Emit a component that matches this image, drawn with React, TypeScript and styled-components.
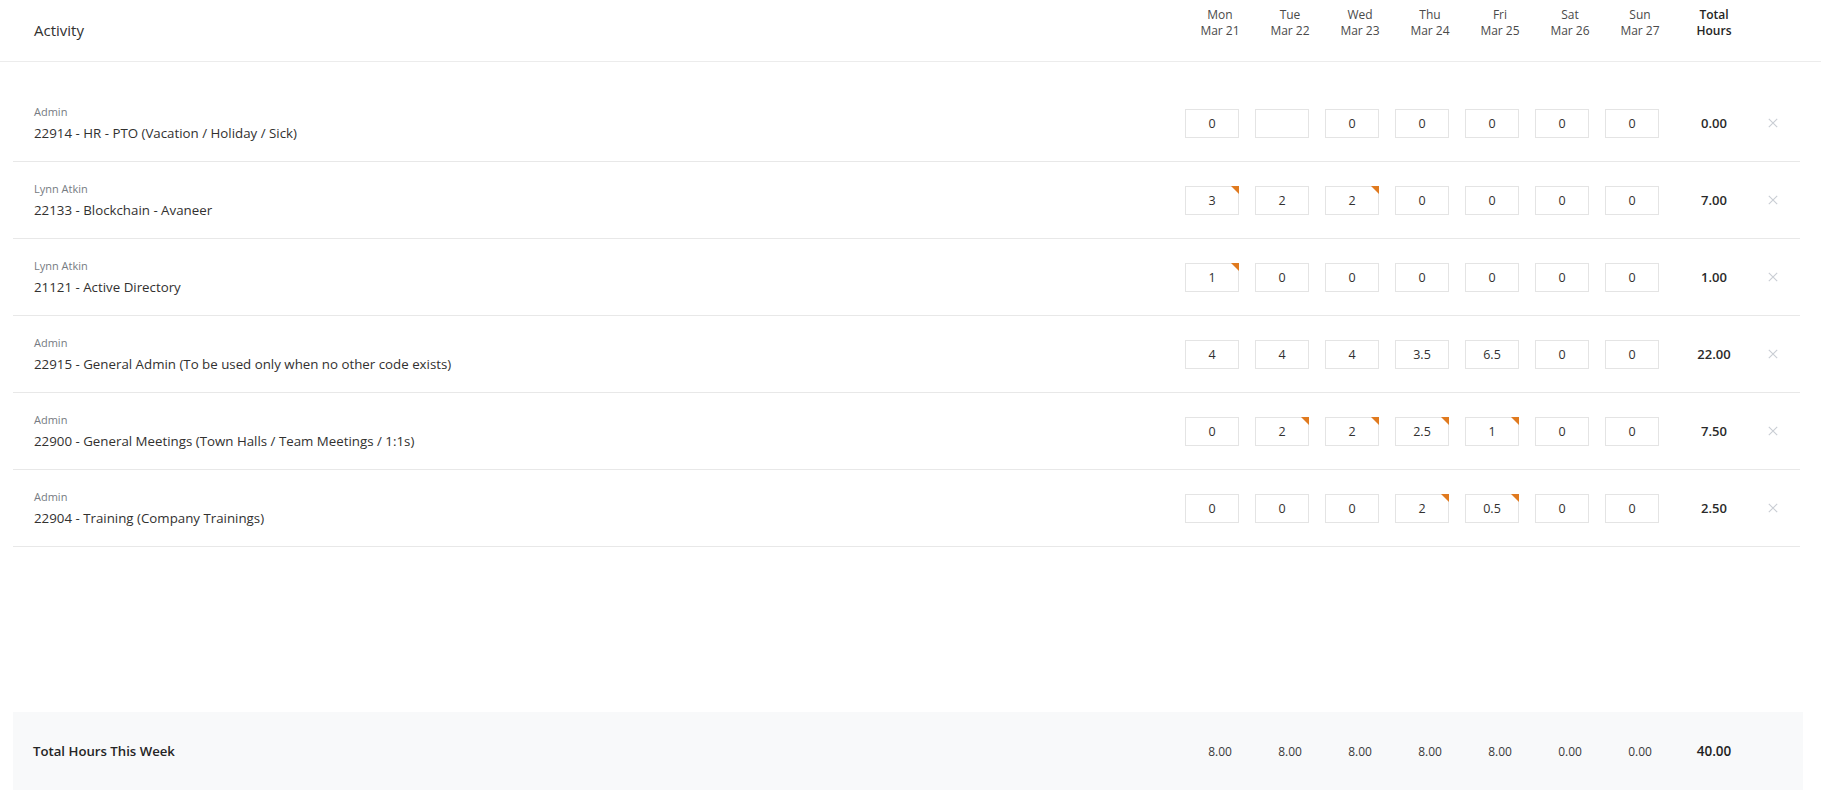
import React from "react";
import styled, { createGlobalStyle } from "styled-components";

const GlobalStyle = createGlobalStyle`
  html, body { margin: 0; padding: 0; background: #ffffff; }
  body { font-family: "Open Sans", "Noto Sans", Arial, sans-serif; color: #323130; }
  * { box-sizing: border-box; }
`;

const Page = styled.div`
  height: 802px;
  display: flex;
  flex-direction: column;
  padding-bottom: 12px;
`;

const gridCols = (action: number) => `minmax(0, 1fr) repeat(7, 70px) 78px ${action}px`;

const Header = styled.header`
  display: grid;
  grid-template-columns: ${gridCols(47)};
  height: 62px;
  padding: 0 21px 0 34px;
  border-bottom: 1px solid #ececec;
`;

const HeaderTitle = styled.div`
  align-self: center;
  font-size: 15px;
  color: #323130;
  padding-bottom: 1px;
`;

const DayHead = styled.div<{ $strong?: boolean }>`
  display: flex;
  flex-direction: column;
  align-items: center;
  padding-top: 7px;
  font-size: 12px;
  line-height: 16px;
  color: ${(p) => (p.$strong ? "#252525" : "#4a4a4a")};
  font-weight: ${(p) => (p.$strong ? 600 : 400)};
`;

const Body = styled.main`
  flex: 1;
  padding: 23px 21px 0 13px;
`;

const Row = styled.div`
  display: grid;
  grid-template-columns: ${gridCols(47)};
  align-items: center;
  height: 77px;
  padding-left: 21px;
  border-bottom: 1px solid #e8e8e8;
`;

const Label = styled.div`
  display: flex;
  flex-direction: column;
  gap: 5px;
`;

const Owner = styled.span`
  font-size: 11px;
  line-height: 15px;
  color: #767b82;
`;

const Title = styled.span`
  font-size: 13.3px;
  line-height: 19px;
  color: #323130;
`;

const Cell = styled.div`
  position: relative;
  width: 54px;
  height: 29px;
`;

const HourInput = styled.input`
  width: 100%;
  height: 100%;
  border: 1px solid #e4e4e4;
  background: #ffffff;
  text-align: center;
  font-family: inherit;
  font-size: 12.5px;
  color: #323130;
  padding: 0;
  outline: none;
`;

const Flag = styled.span`
  position: absolute;
  top: 0;
  right: 0;
  width: 0;
  height: 0;
  border-style: solid;
  border-width: 0 8px 8px 0;
  border-color: transparent #e07a1f transparent transparent;
`;

const Total = styled.div`
  text-align: center;
  font-size: 13px;
  font-weight: 600;
  color: #2a2a2a;
`;

const RemoveButton = styled.button`
  justify-self: start;
  margin-left: 15px;
  width: 10px;
  height: 10px;
  padding: 0;
  border: none;
  background: transparent;
  display: flex;
  cursor: pointer;
`;

const Footer = styled.footer`
  display: grid;
  grid-template-columns: ${gridCols(50)};
  align-items: center;
  height: 78px;
  margin: 0 18px 0 13px;
  padding-left: 20px;
  background: #f8f9fa;
`;

const FooterTitle = styled.div`
  font-size: 13.2px;
  font-weight: 600;
  color: #252525;
`;

const FooterValue = styled.div<{ $strong?: boolean }>`
  text-align: center;
  font-size: ${(p) => (p.$strong ? "13.5px" : "12px")};
  font-weight: ${(p) => (p.$strong ? 600 : 400)};
  color: ${(p) => (p.$strong ? "#1f1f1f" : "#3a3a3a")};
`;

type Entry = { v: string; flag?: boolean };
type Line = { owner: string; title: string; hours: Entry[]; total: string };

const e = (v: string, flag = false): Entry => ({ v, flag });

const days = [
  ["Mon", "Mar 21"],
  ["Tue", "Mar 22"],
  ["Wed", "Mar 23"],
  ["Thu", "Mar 24"],
  ["Fri", "Mar 25"],
  ["Sat", "Mar 26"],
  ["Sun", "Mar 27"],
];

const lines: Line[] = [
  {
    owner: "Admin",
    title: "22914 - HR - PTO (Vacation / Holiday / Sick)",
    hours: [e("0"), e(""), e("0"), e("0"), e("0"), e("0"), e("0")],
    total: "0.00",
  },
  {
    owner: "Lynn Atkin",
    title: "22133 - Blockchain - Avaneer",
    hours: [e("3", true), e("2"), e("2", true), e("0"), e("0"), e("0"), e("0")],
    total: "7.00",
  },
  {
    owner: "Lynn Atkin",
    title: "21121 - Active Directory",
    hours: [e("1", true), e("0"), e("0"), e("0"), e("0"), e("0"), e("0")],
    total: "1.00",
  },
  {
    owner: "Admin",
    title: "22915 - General Admin (To be used only when no other code exists)",
    hours: [e("4"), e("4"), e("4"), e("3.5"), e("6.5"), e("0"), e("0")],
    total: "22.00",
  },
  {
    owner: "Admin",
    title: "22900 - General Meetings (Town Halls / Team Meetings / 1:1s)",
    hours: [e("0"), e("2", true), e("2", true), e("2.5", true), e("1", true), e("0"), e("0")],
    total: "7.50",
  },
  {
    owner: "Admin",
    title: "22904 - Training (Company Trainings)",
    hours: [e("0"), e("0"), e("0"), e("2", true), e("0.5", true), e("0"), e("0")],
    total: "2.50",
  },
];

const weekTotals = ["8.00", "8.00", "8.00", "8.00", "8.00", "0.00", "0.00"];

const CloseIcon = () => (
  <svg width="10" height="10" viewBox="0 0 10 10" fill="none">
    <path d="M0.8 0.8 L9.2 9.2 M9.2 0.8 L0.8 9.2" stroke="#c9cdd4" strokeWidth="1.1" />
  </svg>
);

export default function App() {
  return (
    <>
      <GlobalStyle />
      <Page>
        <Header>
          <HeaderTitle>Activity</HeaderTitle>
          {days.map(([d, date]) => (
            <DayHead key={d}>
              <span>{d}</span>
              <span>{date}</span>
            </DayHead>
          ))}
          <DayHead $strong>
            <span>Total</span>
            <span>Hours</span>
          </DayHead>
          <div />
        </Header>
        <Body>
          {lines.map((line) => (
            <Row key={line.title}>
              <Label>
                <Owner>{line.owner}</Owner>
                <Title>{line.title}</Title>
              </Label>
              {line.hours.map((h, i) => (
                <Cell key={i}>
                  <HourInput readOnly value={h.v} />
                  {h.flag && <Flag />}
                </Cell>
              ))}
              <Total>{line.total}</Total>
              <RemoveButton aria-label="Remove">
                <CloseIcon />
              </RemoveButton>
            </Row>
          ))}
        </Body>
        <Footer>
          <FooterTitle>Total Hours This Week</FooterTitle>
          {weekTotals.map((t, i) => (
            <FooterValue key={i}>{t}</FooterValue>
          ))}
          <FooterValue $strong>40.00</FooterValue>
          <div />
        </Footer>
      </Page>
    </>
  );
}
